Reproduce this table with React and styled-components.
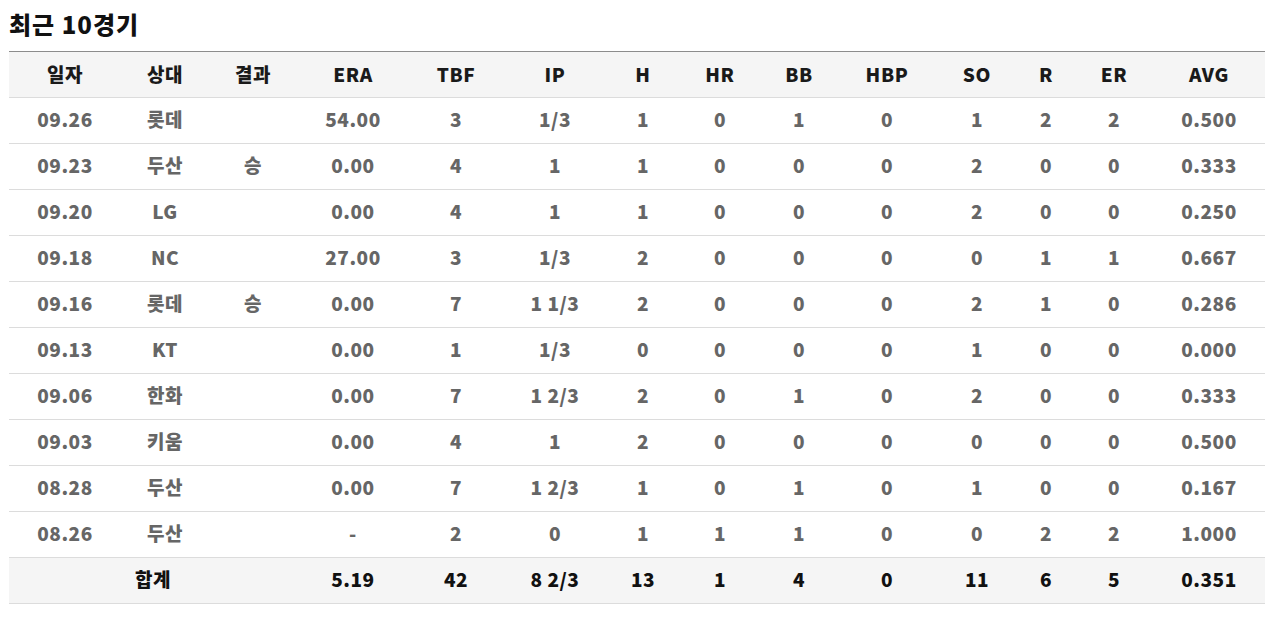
import React from "react";
import styled, { createGlobalStyle } from "styled-components";

const Global = createGlobalStyle`
  html, body { margin: 0; padding: 0; background: #fff; }
  body { font-family: "Noto Sans CJK KR", "Noto Sans", sans-serif; }
`;

const Wrap = styled.div`
  padding: 6px 7px 0 9px;
`;

const Title = styled.h3`
  margin: 0 0 10px;
  font-size: 24px;
  line-height: 35px;
  font-weight: 900;
  color: #111;
  letter-spacing: 1px;
`;

const Table = styled.table`
  width: 1256px;
  border-collapse: collapse;
  table-layout: fixed;
  border-top: 1px solid #8c8c8c;
`;

const Th = styled.th`
  height: 44px;
  padding: 0 0 1px;
  line-height: 24px;
  background: #f5f5f5;
  border-bottom: 1px solid #dcdcdc;
  font-size: 19px;
  font-weight: 900;
  letter-spacing: 0.6px;
  color: #1a1a1a;
  text-align: center;
`;

const Td = styled.td`
  height: 42px;
  padding: 0 0 3px;
  line-height: 24px;
  border-bottom: 1px solid #dcdcdc;
  font-size: 19px;
  letter-spacing: 0.5px;
  font-weight: ${(p) => (p.$total ? 900 : 800)};
  color: ${(p) => (p.$total ? "#111" : "#666")};
  background: ${(p) => (p.$total ? "#f5f5f5" : "#fff")};
  text-align: center;
`;

const widths = [112, 88, 88, 112, 94, 104, 72, 82, 76, 100, 80, 58, 78, 112];
const heads = ["일자", "상대", "결과", "ERA", "TBF", "IP", "H", "HR", "BB", "HBP", "SO", "R", "ER", "AVG"];

const rows = [
  ["09.26", "롯데", "", "54.00", "3", "1/3", "1", "0", "1", "0", "1", "2", "2", "0.500"],
  ["09.23", "두산", "승", "0.00", "4", "1", "1", "0", "0", "0", "2", "0", "0", "0.333"],
  ["09.20", "LG", "", "0.00", "4", "1", "1", "0", "0", "0", "2", "0", "0", "0.250"],
  ["09.18", "NC", "", "27.00", "3", "1/3", "2", "0", "0", "0", "0", "1", "1", "0.667"],
  ["09.16", "롯데", "승", "0.00", "7", "1 1/3", "2", "0", "0", "0", "2", "1", "0", "0.286"],
  ["09.13", "KT", "", "0.00", "1", "1/3", "0", "0", "0", "0", "1", "0", "0", "0.000"],
  ["09.06", "한화", "", "0.00", "7", "1 2/3", "2", "0", "1", "0", "2", "0", "0", "0.333"],
  ["09.03", "키움", "", "0.00", "4", "1", "2", "0", "0", "0", "0", "0", "0", "0.500"],
  ["08.28", "두산", "", "0.00", "7", "1 2/3", "1", "0", "1", "0", "1", "0", "0", "0.167"],
  ["08.26", "두산", "", "-", "2", "0", "1", "1", "1", "0", "0", "2", "2", "1.000"],
];

const total = ["5.19", "42", "8 2/3", "13", "1", "4", "0", "11", "6", "5", "0.351"];

export default function App() {
  return (
    <Wrap>
      <Global />
      <Title>최근 10경기</Title>
      <Table>
        <colgroup>
          {widths.map((w, i) => (
            <col key={i} style={{ width: w }} />
          ))}
        </colgroup>
        <thead>
          <tr>
            {heads.map((h) => (
              <Th key={h}>{h}</Th>
            ))}
          </tr>
        </thead>
        <tbody>
          {rows.map((r, i) => (
            <tr key={i}>
              {r.map((c, j) => (
                <Td key={j}>{c}</Td>
              ))}
            </tr>
          ))}
          <tr>
            <Td $total colSpan={3}>합계</Td>
            {total.map((c, j) => (
              <Td $total key={j}>{c}</Td>
            ))}
          </tr>
        </tbody>
      </Table>
    </Wrap>
  );
}
